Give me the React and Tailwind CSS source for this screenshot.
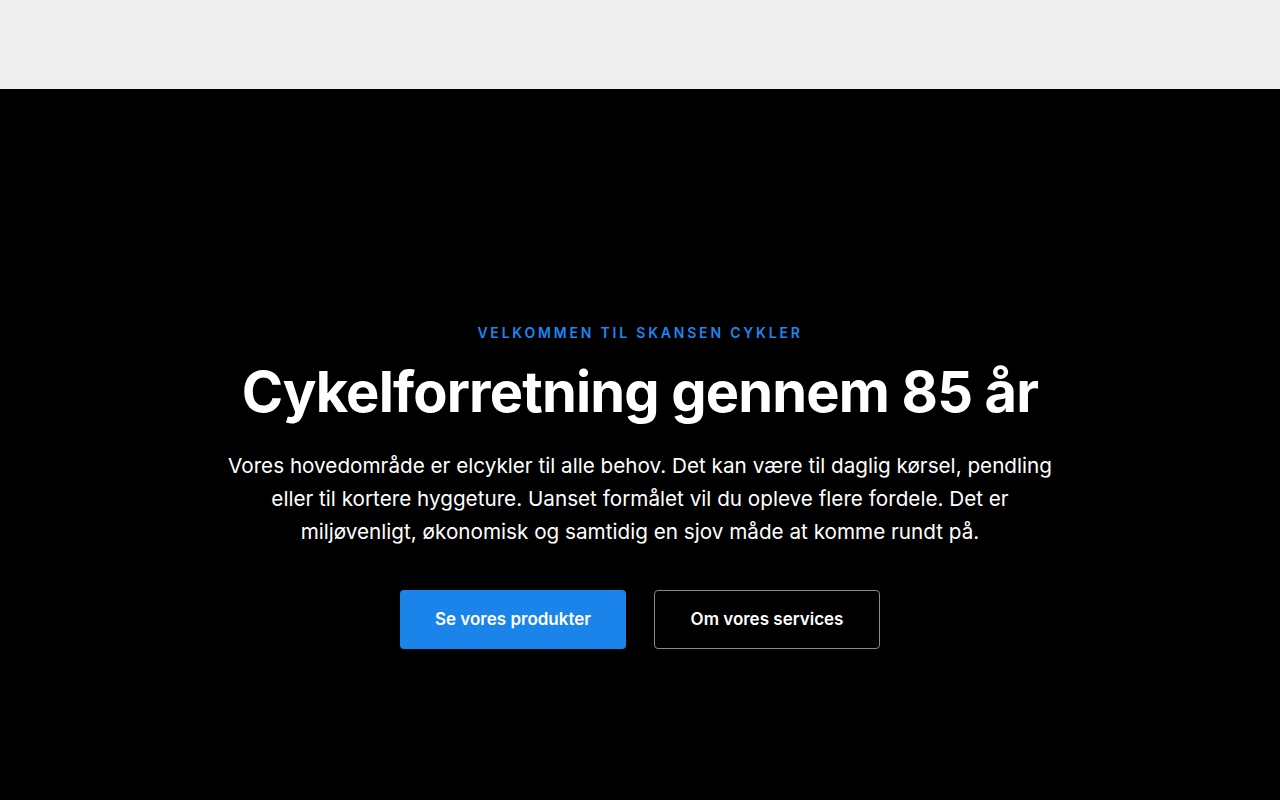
function App() {
  return (
    <div className="min-h-screen flex flex-col font-['Inter',sans-serif]">
      <header className="h-[89px] bg-[#eeeeee]" />
      <section className="bg-black h-[711px] flex flex-col items-center text-center pt-[234px]">
        <p className="text-[14px] leading-5 font-semibold tracking-[0.2em] text-[#1c87f0]">
          VELKOMMEN TIL SKANSEN CYKLER
        </p>
        <h1 className="mt-[16px] text-[56px] leading-[66px] font-bold tracking-[-0.015em] text-white">
          Cykelforretning gennem 85 år
        </h1>
        <p className="mt-[24px] max-w-[830px] text-[20.7px] leading-[33px] text-white">
          Vores hovedområde er elcykler til alle behov. Det kan være til daglig kørsel, pendling eller til kortere hyggeture. Uanset formålet vil du opleve flere fordele. Det er miljøvenligt, økonomisk og samtidig en sjov måde at komme rundt på.
        </p>
        <div className="mt-[42px] flex gap-[28px]">
          <button className="w-[226px] h-[59px] rounded-[4px] bg-[#1b84ea] text-white text-[17px] font-semibold">
            Se vores produkter
          </button>
          <button className="w-[226px] h-[59px] rounded-[4px] border border-[#8a8a8a] text-white text-[17px] font-semibold">
            Om vores services
          </button>
        </div>
      </section>
    </div>
  )
}

export default App;
